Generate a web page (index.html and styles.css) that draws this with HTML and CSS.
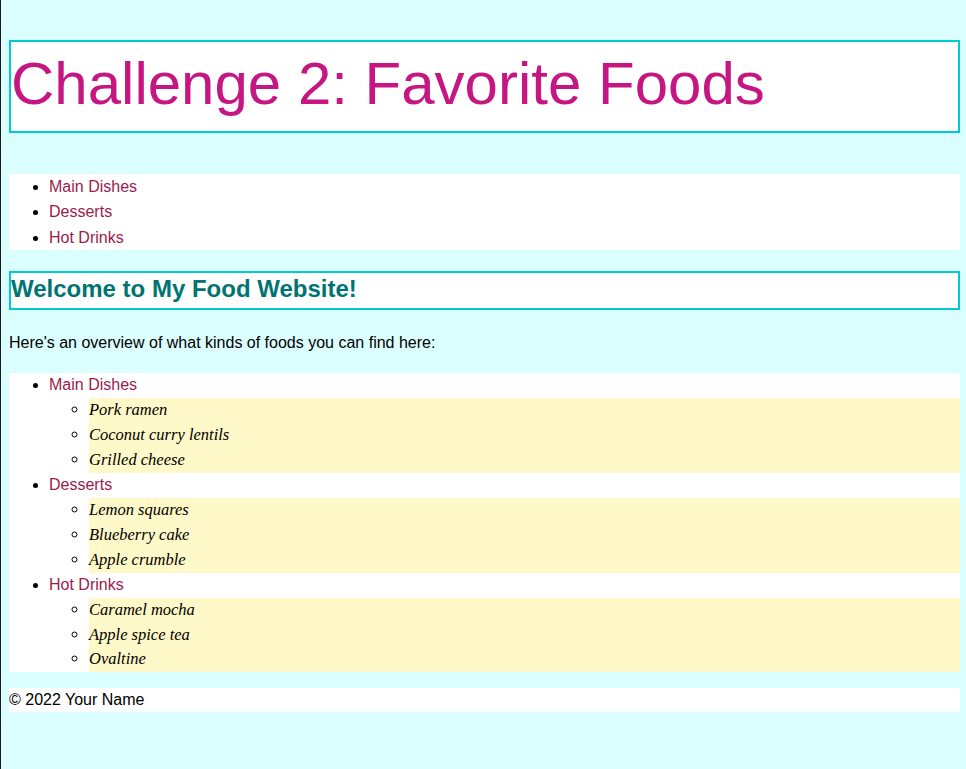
FILE: index.html
```html
<!DOCTYPE html>
<html lang="en">
<head>
<meta charset="utf-8">
<title>Challenge 2: Favorite Foods</title>
<link rel="stylesheet" href="styles.css">
</head>
<body>
  <header>
    <h1 class="page-title">Challenge 2: Favorite Foods</h1>
  </header>
  <nav>
    <ul class="nav-list">
      <li><a href="#main">Main Dishes</a></li>
      <li><a href="#desserts">Desserts</a></li>
      <li><a href="#drinks">Hot Drinks</a></li>
    </ul>
  </nav>
  <main>
    <h2 class="welcome">Welcome to My Food Website!</h2>
    <p class="intro">Here's an overview of what kinds of foods you can find here:</p>
    <ul class="menu">
      <li><a href="#main">Main Dishes</a>
        <ul class="dishes">
          <li>Pork ramen</li>
          <li>Coconut curry lentils</li>
          <li>Grilled cheese</li>
        </ul>
      </li>
      <li><a href="#desserts">Desserts</a>
        <ul class="dishes">
          <li>Lemon squares</li>
          <li>Blueberry cake</li>
          <li>Apple crumble</li>
        </ul>
      </li>
      <li><a href="#drinks">Hot Drinks</a>
        <ul class="dishes">
          <li>Caramel mocha</li>
          <li>Apple spice tea</li>
          <li>Ovaltine</li>
        </ul>
      </li>
    </ul>
  </main>
  <footer class="site-footer">© 2022 Your Name</footer>
</body>
</html>
```

FILE: styles.css
```css
html {
  border-left: 1px solid #1c1c1c;
  min-height: 100%;
}

body {
  margin: 0 6px 8px 8px;
  background: #dbffff;
  color: #000;
  font-family: "Liberation Sans", Arial, Helvetica, sans-serif;
  font-size: 16px;
  line-height: 1.6;
}

a {
  color: #9b1b4b;
  text-decoration: none;
}

.page-title {
  margin: 40px 0 41px;
  padding: 8px 0 14px;
  border: 2px solid #00cbd0;
  background: #fff;
  color: #c51681;
  font-size: 60px;
  font-weight: normal;
  line-height: 67px;
}

.nav-list {
  margin: 0;
  padding-left: 40px;
  background: #fff;
}

.nav-list li {
  line-height: 25.3px;
}

.welcome {
  margin: 21px 0 20px;
  padding: 2px 0 6px;
  border: 2px solid #00cbd0;
  background: #fff;
  color: #007373;
  font-size: 24px;
  font-weight: bold;
  line-height: 27px;
}

.intro {
  margin: 0 0 18px;
}

.menu {
  margin: 0 0 16px;
  padding-left: 40px;
  background: #fff;
}

.menu li {
  line-height: 24.9px;
}

.dishes {
  margin: 0;
  padding-left: 40px;
  list-style-type: circle;
}

.dishes li {
  background: #fff8c8;
  font-family: "Liberation Serif", "Times New Roman", serif;
  font-style: italic;
  font-size: 16.5px;
}

.site-footer {
  background: #fff;
  line-height: 24px;
}
```
